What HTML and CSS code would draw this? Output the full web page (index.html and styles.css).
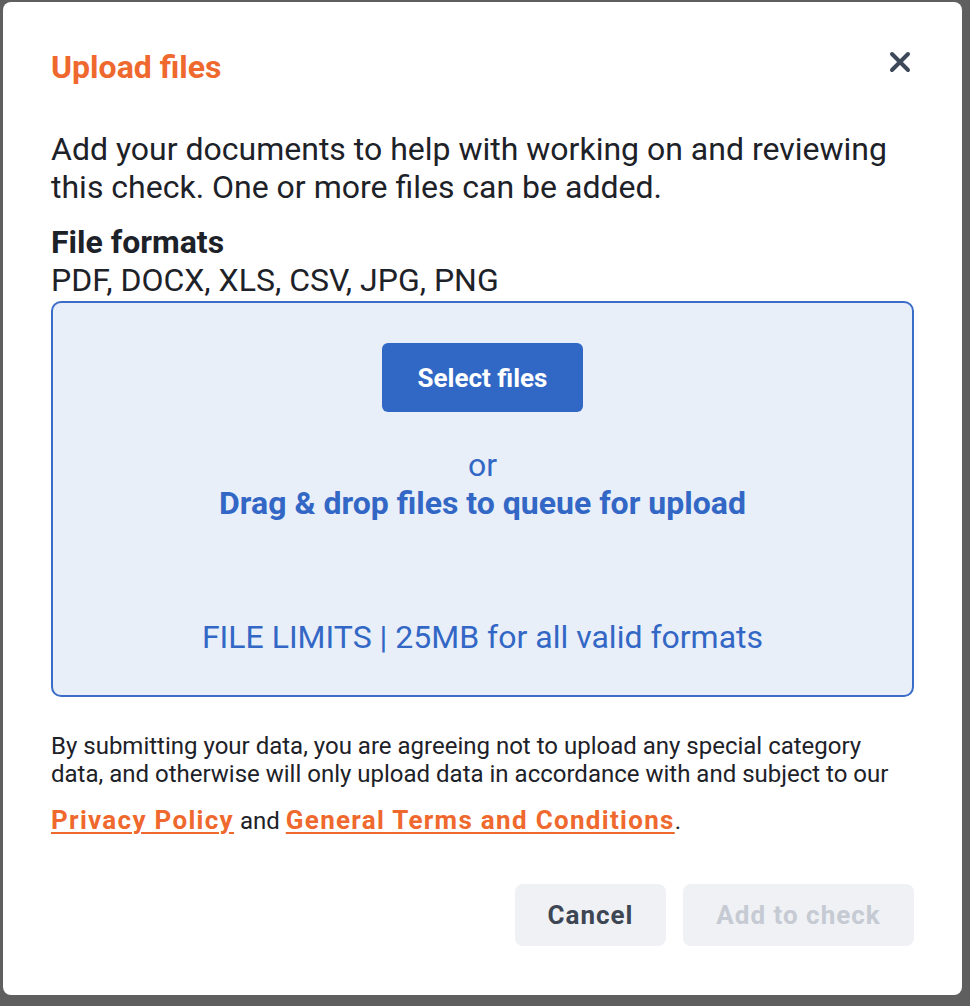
FILE: index.html
```html
<!DOCTYPE html>
<html lang="en">
<head>
<meta charset="utf-8">
<title>Upload files</title>
<link rel="stylesheet" href="styles.css">
</head>
<body>
<div class="backdrop">
  <div class="modal" role="dialog" aria-labelledby="title">
    <div class="modal-header">
      <h2 id="title" class="title">Upload files</h2>
      <button class="close" aria-label="Close">
        <svg width="22" height="22" viewBox="0 0 22 22"><path d="M3 3 L19 19 M19 3 L3 19" stroke="#3d4858" stroke-width="4" stroke-linecap="round"/></svg>
      </button>
    </div>
    <p class="intro">Add your documents to help with working on and reviewing this check. One or more files can be added.</p>
    <div class="formats">
      <div class="formats-title">File formats</div>
      <div class="formats-list">PDF, DOCX, XLS, CSV, JPG, PNG</div>
    </div>
    <div class="dropzone">
      <button class="select-btn">Select files</button>
      <div class="or">or</div>
      <div class="drag">Drag &amp; drop files to queue for upload</div>
      <div class="limits">FILE LIMITS | 25MB for all valid formats</div>
    </div>
    <p class="disclaimer">By submitting your data, you are agreeing not to upload any special category data, and otherwise will only upload data in accordance with and subject to our</p>
    <p class="links"><a href="#">Privacy Policy</a> and <a href="#">General Terms and Conditions</a>.</p>
    <div class="actions">
      <button class="btn btn-cancel">Cancel</button>
      <button class="btn btn-add" disabled>Add to check</button>
    </div>
  </div>
</div>
</body>
</html>
```
FILE: styles.css
```css
* { box-sizing: border-box; }
html, body { margin: 0; padding: 0; }
body {
  background: #5f5f5f;
  font-family: Roboto, "Liberation Sans", Arial, sans-serif;
  color: #1d2128;
  height: 1006px;
  overflow: hidden;
}
.backdrop {
  padding: 2px 8px 0 3px;
}
.modal {
  width: 959px;
  height: 993px;
  background: #fff;
  border-radius: 8px;
  padding: 46px 48px 49px 48px;
  display: flex;
  flex-direction: column;
}
.modal-header {
  display: flex;
  justify-content: space-between;
  align-items: center;
  height: 38px;
}
.title {
  margin: 0;
  font-size: 32px;
  line-height: 38px;
  font-weight: 700;
  color: #ef682d;
}
.close {
  border: 0;
  background: none;
  padding: 0;
  margin-right: 3px;
  margin-top: -10px;
  width: 22px;
  height: 22px;
  display: flex;
}
.intro {
  margin: 44px 0 0;
  font-size: 32px;
  line-height: 38px;
}
.formats {
  margin-top: 17px;
  font-size: 32px;
  line-height: 38px;
}
.formats-title { font-weight: 700; }
.dropzone {
  margin-top: 2px;
  width: 863px;
  border: 2px solid #3a6cc8;
  border-radius: 10px;
  background: #e8eff9;
  padding: 40px 20px 39px;
  display: flex;
  flex-direction: column;
  align-items: center;
  color: #3367c5;
  font-size: 32px;
  line-height: 38px;
}
.select-btn {
  width: 201px;
  height: 69px;
  border: 0;
  border-radius: 6px;
  background: #3268c5;
  color: #fff;
  font-family: inherit;
  font-size: 26px;
  font-weight: 700;
}
.or { margin-top: 34px; }
.drag { font-weight: 700; }
.limits { margin-top: 96px; }
.disclaimer {
  margin: 35px 0 0;
  font-size: 24px;
  line-height: 28px;
}
.links {
  margin: 16px 0 0;
  font-size: 24px;
  line-height: 32px;
}
.links a {
  color: #ef682d;
  font-weight: 700;
  font-size: 26px;
  letter-spacing: 1.3px;
  text-decoration-thickness: 2px;
  text-underline-offset: 3px;
}
.actions {
  margin-top: auto;
  display: flex;
  justify-content: flex-end;
  gap: 17px;
}
.btn {
  height: 62px;
  border: 0;
  border-radius: 8px;
  background: #eff1f5;
  font-family: inherit;
  font-size: 26px;
  font-weight: 700;
  letter-spacing: 1px;
}
.btn-cancel { width: 151px; color: #3d4653; }
.btn-add { width: 231px; color: #c5cad3; }
```
